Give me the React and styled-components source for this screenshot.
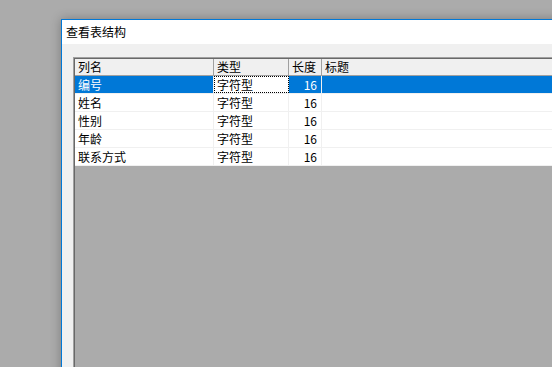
import React from "react";
import styled, { createGlobalStyle } from "styled-components";

const GlobalStyle = createGlobalStyle`
  html, body {
    margin: 0;
    padding: 0;
    overflow: hidden;
    background: #ababab;
  }
  body {
    font-family: "Noto Sans CJK SC", "Liberation Sans", sans-serif;
    font-size: 12px;
    color: #000;
  }
`;

const Desktop = styled.div`
  width: 552px;
  height: 367px;
  padding: 19px 0 0 61px;
  box-sizing: border-box;
  overflow: hidden;
`;

const Window = styled.div`
  width: 620px;
  height: 420px;
  display: flex;
  flex-direction: column;
  border: 1px solid #0078d7;
  background: #f0f0f0;
  box-shadow: 0 0 10px rgba(0, 0, 0, 0.28);
`;

const TitleBar = styled.div`
  height: 24px;
  line-height: 24px;
  background: #fff;
  padding-left: 4px;
  flex-shrink: 0;
`;

const Body = styled.div`
  flex: 1;
  padding: 13px 0 0 11px;
`;

const Grid = styled.div`
  height: 100%;
  background: #ababab;
  border-top: 1px solid #a0a0a0;
  border-left: 1px solid #a0a0a0;
  box-shadow: inset 1px 1px 0 #696969;
  padding: 1px 0 0 1px;
  box-sizing: border-box;
`;

const Row = styled.div`
  display: flex;
  height: ${(p) => (p.$header ? 17 : 18)}px;
  background: ${(p) => (p.$header ? "#f0f0f0" : "#fff")};
  border-bottom: 1px solid ${(p) => (p.$header ? "#a0a0a0" : "#f0f0f0")};
  box-sizing: border-box;
`;

const Cell = styled.div`
  width: ${(p) => (p.$w ? `${p.$w}px` : "auto")};
  flex: ${(p) => (p.$w ? "none" : 1)};
  box-sizing: border-box;
  padding: 0 ${(p) => (p.$right ? 4 : 3)}px 0 3px;
  text-align: ${(p) => (p.$right ? "right" : "left")};
  line-height: ${(p) => (p.$header ? 16 : 17)}px;
  white-space: nowrap;
  overflow: hidden;
  border-right: 1px solid ${(p) => (p.$header ? "#a0a0a0" : "#f0f0f0")};
  background: ${(p) => (p.$sel ? "#0078d7" : "transparent")};
  color: ${(p) => (p.$sel ? "#fff" : "#000")};
`;

const FocusCell = styled(Cell)`
  background: #fff;
  color: #000;
  outline: 1px dotted #000;
  outline-offset: -1px;
`;

const widths = [139, 75, 33];

const columns = ["列名", "类型", "长度", "标题"];

const rows = [
  { name: "编号", type: "字符型", len: 16 },
  { name: "姓名", type: "字符型", len: 16 },
  { name: "性别", type: "字符型", len: 16 },
  { name: "年龄", type: "字符型", len: 16 },
  { name: "联系方式", type: "字符型", len: 16 },
];

export default function App() {
  return (
    <>
      <GlobalStyle />
      <Desktop>
        <Window>
          <TitleBar>查看表结构</TitleBar>
          <Body>
            <Grid>
              <Row $header>
                {columns.map((c, i) => (
                  <Cell key={c} $header $w={widths[i]}>
                    {c}
                  </Cell>
                ))}
              </Row>
              {rows.map((r, i) => {
                const sel = i === 0;
                return (
                  <Row key={r.name}>
                    <Cell $w={widths[0]} $sel={sel}>
                      {r.name}
                    </Cell>
                    {sel ? (
                      <FocusCell $w={widths[1]}>{r.type}</FocusCell>
                    ) : (
                      <Cell $w={widths[1]}>{r.type}</Cell>
                    )}
                    <Cell $w={widths[2]} $right $sel={sel}>
                      {r.len}
                    </Cell>
                    <Cell $sel={sel} />
                  </Row>
                );
              })}
            </Grid>
          </Body>
        </Window>
      </Desktop>
    </>
  );
}
